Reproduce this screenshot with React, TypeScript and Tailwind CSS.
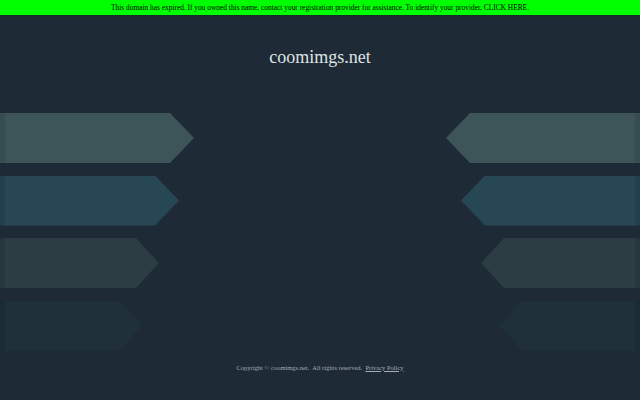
const leftArrows = [
  { color: "bg-[#3d5558]", w: "w-[194px]", clip: "[clip-path:polygon(0_0,170px_0,100%_50%,170px_100%,0_100%)]" },
  { color: "bg-[#284754]", w: "w-[179px]", clip: "[clip-path:polygon(0_0,155px_0,100%_50%,155px_100%,0_100%)]" },
  { color: "bg-[#2c3e44]", w: "w-[159px]", clip: "[clip-path:polygon(0_0,136px_0,100%_50%,136px_100%,0_100%)]" },
  { color: "bg-[#1f303b]", w: "w-[142px]", clip: "[clip-path:polygon(0_0,120px_0,100%_50%,120px_100%,0_100%)]" },
];

const rightArrows = [
  { color: "bg-[#3d5558]", w: "w-[194px]", clip: "[clip-path:polygon(0_50%,24px_0,100%_0,100%_100%,24px_100%)]" },
  { color: "bg-[#284754]", w: "w-[179px]", clip: "[clip-path:polygon(0_50%,24px_0,100%_0,100%_100%,24px_100%)]" },
  { color: "bg-[#2c3e44]", w: "w-[159px]", clip: "[clip-path:polygon(0_50%,23px_0,100%_0,100%_100%,23px_100%)]" },
  { color: "bg-[#1f303b]", w: "w-[141px]", clip: "[clip-path:polygon(0_50%,23px_0,100%_0,100%_100%,23px_100%)]" },
];

export default function App() {
  return (
    <div className="flex h-[400px] w-[640px] flex-col overflow-hidden bg-[#1e2a35] font-['Liberation_Serif',serif]">
      <div className="flex h-[15px] items-center justify-center bg-[#00ff00] text-[7.4px] leading-none text-black">
        This domain has expired. If you owned this name, contact your registration provider for assistance. To identify your provider, CLICK HERE.
      </div>
      <div className="h-[2px] bg-[#1a2b2c]" />

      <div className="mt-[31px] text-center text-[18px] leading-none text-[#dfe3e6]">coomimgs.net</div>

      <div className="mt-[47px] flex justify-between">
        <div className="flex flex-col gap-[12.5px]">
          {leftArrows.map((a, i) => (
            <div key={i} className={`relative h-[50px] ${a.w} ${a.color} ${a.clip}`}>
              <div className="h-full w-[5px] bg-black/10" />
            </div>
          ))}
        </div>
        <div className="flex flex-col items-end gap-[12.5px]">
          {rightArrows.map((a, i) => (
            <div key={i} className={`flex h-[50px] justify-end ${a.w} ${a.color} ${a.clip}`}>
              <div className="h-full w-[5px] bg-black/10" />
            </div>
          ))}
        </div>
      </div>

      <div className="mt-[12px] text-center text-[6.5px] text-[#a4adb3]">
        Copyright © coomimgs.net.&nbsp; All rights reserved.&nbsp; <span className="underline">Privacy Policy</span>
      </div>
    </div>
  );
}
